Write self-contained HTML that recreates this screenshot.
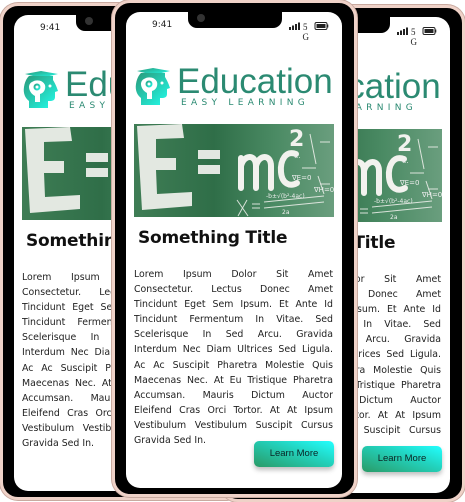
<!DOCTYPE html>
<html><head><meta charset="utf-8"><style>
*{margin:0;padding:0;box-sizing:border-box}
body{width:465px;height:500px;overflow:hidden;background:#fff;position:relative;font-family:"DejaVu Sans","Liberation Sans",sans-serif}
.ph{position:absolute;width:245px;height:497px;border-radius:18px;background:#000;border:3px solid #efd2c8;box-shadow:0 0 0 1px #c9aaa0}
.scr{position:absolute;left:11px;top:9px;width:216px;height:476px;background:#fff;border-radius:14px;overflow:hidden}
.notch{position:absolute;left:73px;top:9px;width:94px;height:16px;background:#000;border-radius:0 0 9px 9px}
.cam{position:absolute;left:82px;top:11px;width:8px;height:8px;border-radius:50%;background:#333}
.time{position:absolute;left:26px;top:8px;font-size:9px;color:#222}
.abs{position:absolute}
.edu{position:absolute;left:51px;top:52px;font-family:"Liberation Sans",sans-serif;font-size:35px;color:#2b8a72;line-height:1}
.easy{position:absolute;left:55px;top:86px;font-size:9px;letter-spacing:4.3px;color:#2b8a72}
.img{position:absolute;left:8px;top:112px;width:200px;height:93px;background:linear-gradient(90deg,#3f7d55,#2f6e48 40%,#4a8a63 70%,#6a9e7e);overflow:hidden}
.title{position:absolute;left:12px;top:216px;font-size:17px;font-weight:bold;color:#111;letter-spacing:-0.2px}
.p{position:absolute;left:8px;top:255px;width:199px;font-size:9.4px;line-height:15.1px;color:#222}
.p span{display:block;text-align:justify;text-align-last:justify;white-space:nowrap;overflow:hidden}
.p span.l{text-align-last:left}
.btn{position:absolute;left:128px;top:429px;width:80px;height:26px;border-radius:5px;background:linear-gradient(20deg,#2a9a66,#22d4c0 60%,#22ffff);box-shadow:0 3px 5px rgba(0,0,0,.25);font-size:9.5px;color:#0a2424;text-align:center;line-height:26px;font-family:"Liberation Sans",sans-serif}
</style></head><body>

<div class="ph" style="left:0;top:3px" id="p1"></div>
<div class="ph" style="left:220px;top:5px" id="p3"></div>
<div class="ph" style="left:112px;top:0" id="p2"></div>

<script>
var html=`<div class="scr">
<div class="time">9:41</div>
<svg class="abs" style="left:163px;top:9px" width="40" height="24" viewBox="0 0 40 24">
<rect x="0" y="6" width="2" height="3" fill="#222"/><rect x="3" y="4.5" width="2" height="4.5" fill="#222"/><rect x="6" y="3" width="2" height="6" fill="#222"/><rect x="9" y="1.5" width="2" height="7.5" fill="#222"/>
<text x="14" y="9" font-size="9" font-family="Liberation Serif" fill="#222">5</text>
<text x="13.5" y="19" font-size="9" font-family="Liberation Serif" fill="#222">G</text>
<rect x="26" y="1.5" width="12" height="7" rx="1.5" fill="none" stroke="#222" stroke-width="1"/><rect x="27.5" y="3" width="9" height="4" fill="#222"/><rect x="38.3" y="3.5" width="1" height="3" fill="#222"/>
</svg>
<svg class="abs" style="left:9px;top:56px" width="36" height="38" viewBox="0 0 36 38">
<defs><linearGradient id="g" x1="0" y1="0" x2="1" y2="1"><stop offset="0" stop-color="#2a9a7a"/><stop offset="1" stop-color="#22ffee"/></linearGradient></defs>
<path d="M2 3 L18 0 L35 3 L18 7 Z" fill="url(#g)"/>
<path d="M6 5 L30 5 L30 9 C33 14 34 17 35 20 L32 21 L32 26 C32 29 30 30 27 30 L25 30 L25 37 L6 37 L6 30 C2 27 0 22 1 16 C2 9 5 6 6 5 Z" fill="url(#g)"/>
<path d="M9 11 C13 8 20 9 22 14 C23 18 21 22 17 23 L17 31 L12 31 L12 25 C8 23 6 19 6 16 C6 14 7 12 9 11 Z" fill="#fff"/>
<circle cx="14" cy="16" r="3.5" fill="url(#g)"/><circle cx="14" cy="16" r="1.5" fill="#fff"/>
<circle cx="27" cy="15" r="1.5" fill="#fff"/>
</svg>
<div class="edu">Education</div>
<div class="easy">EASY LEARNING</div>
<div class="img"><svg width="200" height="93" viewBox="0 0 200 93">
<g fill="#f2f2ee" opacity=".92">
<path d="M3 2 L48 0 L50 14 L22 15 L22 34 L42 34 L42 46 L22 46 L23 70 L58 68 L58 82 L8 86 Z"/>
<rect x="64" y="26" width="22" height="9"/><rect x="64" y="41" width="22" height="9"/>
</g>
<g fill="none" stroke="#f2f2ee" stroke-width="6" stroke-linecap="round">
<path d="M107 64 L107 34 M107 42 C110 30 122 30 122 42 L122 64 M122 42 C125 30 137 30 137 42 L137 64"/>
<path d="M162 30 C152 26 146 36 147 48 C148 60 156 63 163 59"/>
</g>
<text x="155" y="22" font-size="22" font-weight="bold" fill="#f2f2ee" font-family="DejaVu Sans">2</text>
<g stroke="#f2f2ee" stroke-width="1" fill="none" opacity=".85">
<path d="M103 76 L114 92 M113 76 L104 92 M118 80 L126 80 M118 84 L126 84 M130 78 L190 72 M130 84 L190 78"/>
<path d="M176 10 L182 40 M186 18 L196 18 M168 44 L182 44 M186 60 L196 60 M184 52 L190 70"/>
</g>
<text x="160" y="34" font-size="7" fill="#eee">e.</text>
<text x="158" y="56" font-size="7" fill="#eee">∇E=0</text>
<text x="180" y="68" font-size="7" fill="#eee">∇H=0</text>
<text x="132" y="74" font-size="6" fill="#eee">-b±√(b²-4ac)</text>
<text x="148" y="90" font-size="6" fill="#eee">2a</text>
</svg></div>
<div class="title">Something Title</div>
<div class="p">
<span>Lorem Ipsum Dolor Sit Amet</span>
<span>Consectetur. Lectus Donec Amet</span>
<span>Tincidunt Eget Sem Ipsum. Et Ante Id</span>
<span>Tincidunt Fermentum In Vitae. Sed</span>
<span>Scelerisque In Sed Arcu. Gravida</span>
<span>Interdum Nec Diam Ultrices Sed Ligula.</span>
<span>Ac Ac Suscipit Pharetra Molestie Quis</span>
<span>Maecenas Nec. At Eu Tristique Pharetra</span>
<span>Accumsan. Mauris Dictum Auctor</span>
<span>Eleifend Cras Orci Tortor. At At Ipsum</span>
<span>Vestibulum Vestibulum Suscipit Cursus</span>
<span class="l">Gravida Sed In.</span>
</div>
<div class="btn">Learn More</div>
</div>
<div class="notch"></div><div class="cam"></div>`;
['p1','p2','p3'].forEach(function(id){document.getElementById(id).innerHTML=html;});
</script>
</body></html>
